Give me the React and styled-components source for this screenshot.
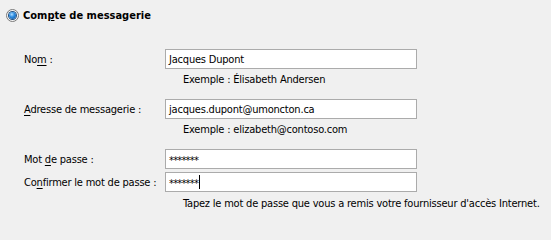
import React from "react";
import styled, { createGlobalStyle } from "styled-components";

const GlobalStyle = createGlobalStyle`
  html, body {
    margin: 0;
    padding: 0;
    background: #f0f0f0;
  }
  body {
    font-family: "DejaVu Sans Condensed", "DejaVu Sans", sans-serif;
    font-size: 11px;
    letter-spacing: -0.2px;
    color: #000;
  }
`;

const Page = styled.div`
  width: 551px;
  height: 216px;
  background: #f0f0f0;
  overflow: hidden;
`;

const Header = styled.label`
  display: flex;
  align-items: center;
  gap: 4px;
  padding: 9px 0 0 6px;
  height: 12px;
  font-weight: bold;
  font-size: 11px;
  letter-spacing: 0;
`;

const Radio = styled.span`
  box-sizing: border-box;
  width: 13px;
  height: 13px;
  border-radius: 50%;
  border: 1px solid #7a7a7a;
  background: radial-gradient(circle, #ffffff 55%, #dcdcdc 100%);
  display: flex;
  align-items: center;
  justify-content: center;

  &::after {
    content: "";
    width: 7px;
    height: 7px;
    border-radius: 50%;
    background: radial-gradient(circle at 40% 35%, #b5e0ff 0%, #2f8fe3 40%, #0b4a94 100%);
    box-shadow: 0 0 0 1px #23507f;
  }
`;

const Form = styled.div`
  display: flex;
  flex-direction: column;
  padding-left: 24px;
  margin-top: 28px;
`;

const Row = styled.div`
  display: grid;
  grid-template-columns: 141px 252px;
  align-items: center;
  height: 20px;
  margin-top: ${(p) => p.$gap || 0}px;
`;

const Label = styled.span`
  white-space: nowrap;

  u {
    text-decoration: underline;
    text-underline-offset: 2px;
  }
`;

const Box = styled.div`
  box-sizing: border-box;
  height: 20px;
  border: 1px solid #ababab;
  background: #fff;
  padding: 0 0 0 3px;
  display: flex;
  align-items: center;
  font-size: 11px;
`;

const Stars = styled.span`
  letter-spacing: -0.8px;
  padding-top: 2px;
`;

const Caret = styled.span`
  display: inline-block;
  width: 1px;
  height: 14px;
  margin-left: 1px;
  background: #000;
`;

const Hint = styled.div`
  padding-left: 159px;
  line-height: 14px;
  height: 14px;
  margin-top: ${(p) => p.$gap || 0}px;
  white-space: nowrap;
`;

export default function App() {
  return (
    <Page>
      <GlobalStyle />
      <Header>
        <Radio />
        <span>
          Com<u>p</u>te de messagerie
        </span>
      </Header>
      <Form>
        <Row>
          <Label>
            No<u>m</u> :
          </Label>
          <Box>Jacques Dupont</Box>
        </Row>
        <Hint $gap={4}>Exemple : Élisabeth Andersen</Hint>

        <Row $gap={12}>
          <Label>
            <u>A</u>dresse de messagerie :
          </Label>
          <Box>jacques.dupont@umoncton.ca</Box>
        </Row>
        <Hint $gap={4}>Exemple : elizabeth@contoso.com</Hint>

        <Row $gap={12}>
          <Label>
            Mot <u>d</u>e passe :
          </Label>
          <Box>
            <Stars>*******</Stars>
          </Box>
        </Row>
        <Row $gap={3}>
          <Label>
            Co<u>n</u>firmer le mot de passe :
          </Label>
          <Box>
            <Stars>*******</Stars>
            <Caret />
          </Box>
        </Row>
        <Hint $gap={5}>
          Tapez le mot de passe que vous a remis votre fournisseur d'accès Internet.
        </Hint>
      </Form>
    </Page>
  );
}
